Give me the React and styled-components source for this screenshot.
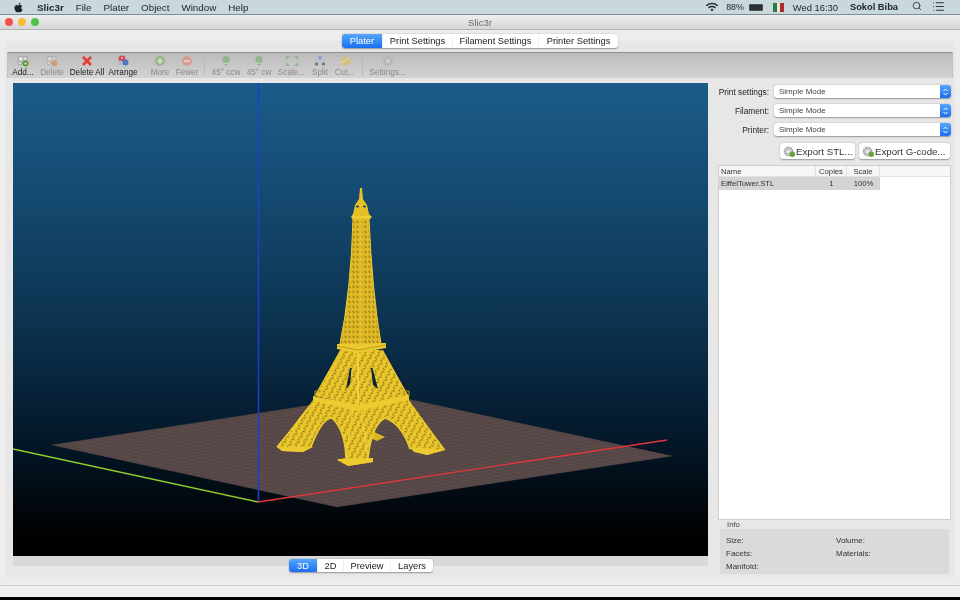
import React from 'react'
import styled, { createGlobalStyle } from 'styled-components'
import { FaApple, FaWifi } from 'react-icons/fa'
import { Search, List } from 'lucide-react'

const GlobalStyle = createGlobalStyle`
  html, body {
    margin: 0;
    padding: 0;
    background: #000;
    overflow: hidden;
  }
  * {
    box-sizing: border-box;
  }
`

const Screen = styled.div`
  width: 960px;
  height: 600px;
  display: flex;
  flex-direction: column;
  overflow: hidden;
  background: #000;
  font-family: 'Liberation Sans', Arial, sans-serif;
  color: #222;
  filter: blur(0.3px);
`

const MenuBar = styled.div`
  height: 15px;
  flex: none;
  display: flex;
  align-items: center;
  padding: 0 15px 0 13px;
  background: #c9d8dc;
  border-bottom: 1px solid #7f8e91;
  font-size: 9.8px;
  color: #20282b;
`

const MenuItem = styled.span`
  margin-left: ${(p) => p.$gap}px;
  font-size: ${(p) => (p.$size ? `${p.$size}px` : 'inherit')};
  font-weight: ${(p) => (p.$bold ? 700 : 400)};
  white-space: nowrap;
`

const Spacer = styled.div`
  flex: 1;
`

const Flag = styled.div`
  width: 11px;
  height: 9px;
  margin-left: 10px;
  background: linear-gradient(to right, #2f7a3a 0 33%, #e6e6e6 33% 66%, #b02a2a 66%);
`

const Battery = styled.div`
  width: 14px;
  height: 7px;
  margin-left: 5px;
  background: #2a2f31;
  border: 1px solid #4a5052;
  border-radius: 1px;
`

const Window = styled.div`
  height: 582px;
  flex: none;
  display: flex;
  flex-direction: column;
  background: #ededed;
  border-radius: 4px 4px 0 0;
`

const TitleBar = styled.div`
  height: 15px;
  flex: none;
  position: relative;
  display: flex;
  align-items: center;
  justify-content: center;
  background: linear-gradient(to bottom, #eeeeee, #d6d6d6);
  border-bottom: 1px solid #b2b2b2;
  font-size: 9.5px;
  color: #6a6a6a;
`

const Lights = styled.div`
  position: absolute;
  left: 5px;
  top: 3px;
  display: flex;
  gap: 5px;
`

const Light = styled.span`
  width: 8px;
  height: 8px;
  border-radius: 50%;
  background: ${(p) => p.$color};
`

const Segments = styled.div`
  align-self: center;
  flex: none;
  display: flex;
  height: 14px;
  margin-top: ${(p) => p.$top}px;
  margin-bottom: -7px;
  position: relative;
  z-index: 1;
  background: #fff;
  border-radius: 3px;
  box-shadow: 0 0.5px 1.5px rgba(0, 0, 0, 0.35);
  font-size: ${(p) => p.$size}px;
`

const Segment = styled.div`
  width: ${(p) => p.$width}px;
  display: flex;
  align-items: center;
  justify-content: center;
  color: ${(p) => (p.$active ? '#fff' : '#222')};
  background: ${(p) => (p.$active ? 'linear-gradient(to bottom, #55a6fb, #1a6ff0)' : 'transparent')};
  border-radius: ${(p) => (p.$active ? '3px 0 0 3px' : '0')};
  border-left: ${(p) => (p.$active ? 'none' : '1px solid #f0f0f0')};
`

const TabBox = styled.div`
  flex: none;
  height: 536px;
  margin: 0 5px;
  padding: 11px 2px 0;
  display: flex;
  flex-direction: column;
  background: #e7e7e7;
  border-radius: 3px;
`

const WindowFooter = styled.div`
  flex: 1;
  margin-top: 8px;
  border-top: 1px solid #cfcfcf;
  background: #f0f0f0;
`

const Toolbar = styled.div`
  height: 26px;
  flex: none;
  display: flex;
  align-items: flex-start;
  padding: 2px 0 0 3px;
  background: linear-gradient(to bottom, #bcbcbc, #d3d3d3);
  border-top: 1px solid #8c8c8c;
  border-left: 1px solid #c0c0c0;
  border-right: 1px solid #c0c0c0;
`

const Tool = styled.div`
  width: ${(p) => p.$width}px;
  margin-right: ${(p) => p.$gap}px;
  display: flex;
  flex-direction: column;
  align-items: center;
  font-size: 8.2px;
  line-height: 10px;
  white-space: nowrap;
  color: ${(p) => (p.$off ? '#8a8a8a' : '#202020')};
  svg {
    display: block;
    height: 12px;
    margin-bottom: 1px;
    opacity: ${(p) => (p.$off ? 0.6 : 1)};
  }
`

const ToolDivider = styled.div`
  width: 1px;
  height: 20px;
  margin: 1px 6px 0 0;
  background: #bababa;
`

const Body = styled.div`
  flex: 1;
  display: flex;
  min-height: 0;
`

const LeftColumn = styled.div`
  width: 701px;
  flex: none;
  padding: 5px 0 0 6px;
  display: flex;
  flex-direction: column;
`

const Viewport = styled.div`
  width: 695px;
  height: 473px;
  flex: none;
  background: linear-gradient(to bottom, #1b5c89 0%, #14496f 25%, #0c3350 50%, #04182a 75%, #000 96%);
`

const SceneSvg = styled.svg`
  display: block;
  width: 695px;
  height: 473px;
`

const ViewFooter = styled.div`
  height: 10px;
  flex: none;
  display: flex;
  flex-direction: column;
  background: #d9d9d9;
  border-radius: 0 0 2px 2px;
`

const ViewTabs = styled(Segments)`
  margin-left: 276px;
  align-self: flex-start;
  height: 13px;
`

const SidePanel = styled.div`
  flex: 1;
  min-width: 0;
  padding: 7px 0 0 10px;
  display: flex;
  flex-direction: column;
`

const FieldRow = styled.div`
  height: 13px;
  flex: none;
  margin-bottom: 6px;
  display: flex;
  align-items: center;
  justify-content: flex-end;
  gap: 5px;
  padding-right: 2px;
`

const FieldLabel = styled.span`
  font-size: 8.3px;
  color: #222;
`

const Select = styled.div`
  width: 177px;
  height: 13px;
  display: flex;
  align-items: center;
  justify-content: space-between;
  padding-left: 5px;
  background: #fff;
  border-radius: 3px;
  box-shadow: 0 0.5px 1.5px rgba(0, 0, 0, 0.35);
  font-size: 8px;
  color: #444;
`

const Stepper = styled.div`
  width: 11px;
  height: 13px;
  display: flex;
  align-items: center;
  justify-content: center;
  background: linear-gradient(to bottom, #55a6fb, #1a6ff0);
  border-radius: 0 3px 3px 0;
`

const ExportRow = styled.div`
  flex: none;
  display: flex;
  justify-content: flex-end;
  gap: 4px;
  margin: 1px 3px 6px 0;
`

const ExportButton = styled.div`
  width: ${(p) => p.$width}px;
  height: 16px;
  display: flex;
  align-items: center;
  padding-left: 3px;
  background: #fff;
  border-radius: 3px;
  box-shadow: 0 0.5px 1.5px rgba(0, 0, 0, 0.35);
  font-size: 9.7px;
  color: #333;
  white-space: nowrap;
`

const ObjectList = styled.div`
  width: 233px;
  height: 355px;
  flex: none;
  background: #fff;
  border: 1px solid #cfcfcf;
`

const ListRow = styled.div`
  display: grid;
  grid-template-columns: 97px 31px 33px 70px;
  height: ${(p) => p.$height}px;
  align-items: center;
  font-size: 7.7px;
  color: #333;
  background: ${(p) => (p.$header ? '#f6f6f6' : 'transparent')};
  border-bottom: ${(p) => (p.$header ? '1px solid #e2e2e2' : 'none')};
`

const ListCell = styled.div`
  height: 100%;
  display: flex;
  align-items: center;
  justify-content: ${(p) => (p.$center ? 'center' : 'flex-start')};
  padding-left: ${(p) => (p.$center ? 0 : 2)}px;
  background: ${(p) => (p.$selected ? '#d4d4d4' : 'transparent')};
  border-right: ${(p) => (p.$header ? '1px solid #e0e0e0' : 'none')};
`

const InfoTitle = styled.div`
  height: 9px;
  flex: none;
  padding-left: 9px;
  font-size: 7.7px;
  line-height: 9px;
  color: #444;
`

const InfoBox = styled.div`
  width: 229px;
  height: 45px;
  flex: none;
  margin-left: 2px;
  padding: 5px 0 0 6px;
  display: grid;
  grid-template-columns: 110px 1fr;
  grid-auto-rows: 13px;
  align-items: center;
  background: #dadada;
  border-radius: 2px;
  font-size: 8px;
  color: #333;
`

const tools = [
  { label: 'Add...', kind: 'add', width: 24, gap: 5 },
  { label: 'Delete', kind: 'del', width: 24, gap: 5, off: true },
  { label: 'Delete All', kind: 'x', width: 36, gap: 3 },
  { label: 'Arrange', kind: 'arrange', width: 30, gap: 12 },
  { label: 'More', kind: 'more', width: 20, gap: 6, off: true },
  { label: 'Fewer', kind: 'fewer', width: 22, gap: 6, off: true },
  { divider: true },
  { label: '45° ccw', kind: 'rot', width: 30, gap: 5, off: true },
  { label: '45° cw', kind: 'rot', width: 26, gap: 6, off: true },
  { label: 'Scale...', kind: 'scale', width: 27, gap: 7, off: true },
  { label: 'Split', kind: 'split', width: 16, gap: 6, off: true },
  { label: 'Cut...', kind: 'cut', width: 21, gap: 7, off: true },
  { divider: true },
  { label: 'Settings...', kind: 'gear', width: 37, gap: 0, off: true }
]

const ToolGlyph = ({ kind }) => {
  const art = {
    add: (
      <>
        <circle cx="5" cy="4" r="2.6" fill="#e8e8e8" stroke="#8d8d8d" strokeWidth="0.7" />
        <circle cx="9" cy="3.5" r="2.2" fill="#dcdcdc" stroke="#8d8d8d" strokeWidth="0.7" />
        <circle cx="4" cy="8" r="2" fill="#d8d8d8" stroke="#8d8d8d" strokeWidth="0.7" />
        <circle cx="9.5" cy="8.5" r="3" fill="#5f9a32" />
        <circle cx="9.5" cy="8.5" r="1.1" fill="#e7f3d4" />
      </>
    ),
    del: (
      <>
        <circle cx="5" cy="4" r="2.6" fill="#e8e8e8" stroke="#8d8d8d" strokeWidth="0.7" />
        <circle cx="9" cy="3.5" r="2.2" fill="#dcdcdc" stroke="#8d8d8d" strokeWidth="0.7" />
        <circle cx="4" cy="8" r="2" fill="#d8d8d8" stroke="#8d8d8d" strokeWidth="0.7" />
        <circle cx="9.5" cy="8.5" r="3" fill="#d9883c" />
      </>
    ),
    x: <path d="M3 2 L11 10 M11 2 L3 10" stroke="#e23d36" strokeWidth="2.6" />,
    arrange: (
      <>
        <circle cx="6" cy="4" r="3.4" fill="#d8454a" />
        <circle cx="9.5" cy="7.5" r="3" fill="#4a78c4" />
        <circle cx="4.5" cy="8" r="2.4" fill="#b9b9c4" />
        <circle cx="6" cy="3" r="1" fill="#f3c7c7" />
      </>
    ),
    more: (
      <>
        <circle cx="7" cy="6" r="5" fill="#74b060" />
        <path d="M7 3 V9 M4 6 H10" stroke="#e6f3df" strokeWidth="1.5" />
      </>
    ),
    fewer: (
      <>
        <circle cx="7" cy="6" r="5" fill="#e88070" />
        <path d="M4 6 H10" stroke="#fbe6e2" strokeWidth="1.6" />
      </>
    ),
    rot: (
      <>
        <circle cx="7" cy="4.5" r="3.6" fill="#6fae66" />
        <path d="M5 9 H9 L7 11.5 Z" fill="#6fae66" />
      </>
    ),
    scale: (
      <>
        <path d="M1 1 H5 L1 5 Z M13 1 H9 L13 5 Z M1 11 H5 L1 7 Z M13 11 H9 L13 7 Z" fill="#6fae66" />
      </>
    ),
    split: (
      <>
        <circle cx="7" cy="2.5" r="2" fill="#5f93d8" />
        <circle cx="3.5" cy="9" r="1.8" fill="#444" />
        <circle cx="10.5" cy="9" r="1.8" fill="#444" />
        <circle cx="7" cy="6" r="1.1" fill="#9cc0ea" />
      </>
    ),
    cut: (
      <>
        <path d="M2 5 L7 1 L13 4 L12 9 L7 11 L3 9 Z" fill="#e4bd52" />
        <path d="M3 8 L11 3" stroke="#f7e7b4" strokeWidth="1.2" />
      </>
    ),
    gear: (
      <>
        <circle cx="7" cy="6" r="4" fill="#bdbdbd" stroke="#9a9a9a" strokeWidth="1.4" strokeDasharray="1.5 1" />
        <circle cx="7" cy="6" r="1.6" fill="#e0e0e0" />
      </>
    )
  }
  return <svg viewBox="0 0 14 12" width="14" height="12">{art[kind]}</svg>
}

const CogGlyph = () => (
  <svg viewBox="0 0 14 14" width="13" height="13">
    <circle cx="6" cy="7" r="4.6" fill="#c6c9c4" stroke="#8f948c" strokeWidth="1.2" strokeDasharray="1.6 1" />
    <circle cx="6" cy="7" r="1.7" fill="#eeeeee" />
    <circle cx="10" cy="10" r="3" fill="#67a53a" />
  </svg>
)

const StepperGlyph = () => (
  <svg viewBox="0 0 7 10" width="7" height="10">
    <path d="M1.5 4 L3.5 2 L5.5 4 M1.5 6 L3.5 8 L5.5 6" fill="none" stroke="#fff" strokeWidth="1" />
  </svg>
)

// bed corners, in page coordinates
const bed = { a: [52, 445], b: [384, 394], c: [672, 456], d: [337, 507] }
const lerp = (p, q, t) => [p[0] + (q[0] - p[0]) * t, p[1] + (q[1] - p[1]) * t]
const bedLines = Array.from({ length: 33 }, (_, i) => i / 32).flatMap((t) => [
  [lerp(bed.a, bed.b, t), lerp(bed.d, bed.c, t)],
  [lerp(bed.a, bed.d, t), lerp(bed.b, bed.c, t)]
])

const Scene = () => (
  <SceneSvg viewBox="13 83 695 473">
    <defs>
      <pattern id="lattice" width="6" height="6" patternUnits="userSpaceOnUse" patternTransform="rotate(28)">
        <rect width="6" height="6" fill="#e8c52a" />
        <path d="M1 1 L3.4 2.4 M4 4 L1.6 5.2" stroke="#7d600e" strokeWidth="1" />
        <path d="M4.6 0.6 L5.6 2.4" stroke="#f5dc3e" strokeWidth="0.8" />
      </pattern>
      <pattern id="latticeFine" width="4" height="5" patternUnits="userSpaceOnUse">
        <rect width="4" height="5" fill="#dcb624" />
        <path d="M0.8 0.8 L2.2 3.2" stroke="#7c600d" strokeWidth="0.9" />
        <path d="M3 3.4 L3.6 4.6" stroke="#f0d436" strokeWidth="0.7" />
      </pattern>
    </defs>

    <polygon points={[bed.a, bed.b, bed.c, bed.d].join(' ')} fill="#534647" />
    {bedLines.map(([p, q], i) => (
      <line key={i} x1={p[0]} y1={p[1]} x2={q[0]} y2={q[1]} stroke="#7d5c56" strokeWidth="0.5" strokeOpacity="0.45" />
    ))}

    <line x1="258.5" y1="83" x2="258.5" y2="502" stroke="#1b40cf" strokeWidth="1.5" />
    <line x1="13" y1="449" x2="258" y2="502" stroke="#8fce2e" strokeWidth="1.4" />
    <line x1="258" y1="502" x2="667" y2="440" stroke="#e0363c" strokeWidth="1.4" />

    {/* back leg */}
    <polygon points="370,430 385,437 377,441 370,438" fill="#dcb624" />

    {/* lower legs and arches */}
    <path
      d="M313,400 L409,400 L445,450 L427,455 L410,449 Q402,424 385,418 Q372,424 368,458 L373,462 L348,466 L337,460 L346,458 Q345,430 332,418 Q322,418 311,447 L303,452 L282,451 L277,447 Z"
      fill="url(#lattice)"
    />
    <path d="M277,447 L313,447 L303,452 L282,451 Z" fill="#eccb30" />
    <path d="M337,459 L373,458 L373,462 L348,466 Z" fill="#eccb30" />
    <path d="M410,447 L445,450 L427,455 L414,452 Z" fill="#eccb30" />
    <path d="M346,458 L353,410 M368,457 L361,410" stroke="#f0d234" strokeWidth="1.2" fill="none" />
    <path d="M311,447 Q322,418 332,418 Q345,430 346,458 M368,458 Q372,424 385,418 Q402,424 410,449" stroke="#eccb30" strokeWidth="1.6" fill="none" />
    <path d="M277,447 L314,402 M445,450 L408,402" stroke="#eccb30" strokeWidth="1.2" fill="none" />

    {/* middle section */}
    <polygon points="340,350 383,350 408,396 358,406 315,396" fill="url(#lattice)" />
    <polygon points="350,368 351.5,368 350,384 346,389" fill="#07233a" />
    <polygon points="371,368 372.5,368 378,389 373,385" fill="#07233a" />
    <path d="M358,353 L358,406" stroke="#f0d234" strokeWidth="2" />
    <path d="M340,352 L315,396 M383,352 L408,396" stroke="#eccb30" strokeWidth="1.2" />

    {/* first platform */}
    <polygon points="313,396 358,405 409,395 409,400 358,411 313,401" fill="#eccb30" />
    <path d="M315,397 V391 H322 M403,396 V391 H409 V396" stroke="#b8951c" strokeWidth="1" fill="none" />

    {/* upper shaft */}
    <path d="M353,219 L369,219 Q372,290 381,344 L340,344 Q351,290 353,219 Z" fill="url(#latticeFine)" />
    <path d="M353,219 Q351,290 340,344 M369,219 Q372,290 381,344" stroke="#eccb30" strokeWidth="1" fill="none" />
    <path d="M361,219 V344" stroke="#eccb30" strokeWidth="1.2" />

    {/* second platform */}
    <polygon points="337,344 386,343 386,348 358,353 337,349" fill="#eccb30" />
    <path d="M337,346 L358,350 L386,345" stroke="#a98818" strokeWidth="0.7" fill="none" />

    {/* top */}
    <path
      d="M360,188 L362,188 L363,199 L367,205 L369,214 L372,217 L369,220 L353,220 L351,217 L353,214 L355,205 L359,199 Z"
      fill="#e4bf26"
    />
    <ellipse cx="357.5" cy="206.5" rx="1.6" ry="1" fill="#23405a" />
    <ellipse cx="364.5" cy="206.5" rx="1.6" ry="1" fill="#23405a" />
    <path d="M352,217 H371" stroke="#f2da40" strokeWidth="1.2" />
  </SceneSvg>
)

const App = () => (
  <>
    <GlobalStyle />
    <Screen>
      <MenuBar>
        <FaApple size={11} color="#1c2224" />
        <MenuItem $gap={13} $bold>Slic3r</MenuItem>
        <MenuItem $gap={12}>File</MenuItem>
        <MenuItem $gap={12}>Plater</MenuItem>
        <MenuItem $gap={12}>Object</MenuItem>
        <MenuItem $gap={12}>Window</MenuItem>
        <MenuItem $gap={12}>Help</MenuItem>
        <Spacer />
        <FaWifi size={12} color="#2a3133" />
        <MenuItem $gap={8} $size={8.8}>88%</MenuItem>
        <Battery />
        <Flag />
        <MenuItem $gap={9} $size={9.4}>Wed 16:30</MenuItem>
        <MenuItem $gap={12} $size={9.3} $bold>Sokol Biba</MenuItem>
        <MenuItem $gap={14}>
          <Search size={10} strokeWidth={2} color="#2a3133" />
        </MenuItem>
        <MenuItem $gap={10}>
          <List size={13} strokeWidth={2} color="#2a3133" />
        </MenuItem>
      </MenuBar>

      <Window>
        <TitleBar>
          <Lights>
            <Light $color="#f2514a" />
            <Light $color="#f5bb3c" />
            <Light $color="#4ec24a" />
          </Lights>
          Slic3r
        </TitleBar>

        <Segments $top={4} $size={9.3}>
          <Segment $width={40} $active>Plater</Segment>
          <Segment $width={70}>Print Settings</Segment>
          <Segment $width={86}>Filament Settings</Segment>
          <Segment $width={80}>Printer Settings</Segment>
        </Segments>

        <TabBox>
          <Toolbar>
            {tools.map((t, i) =>
              t.divider ? (
                <ToolDivider key={i} />
              ) : (
                <Tool key={i} $width={t.width} $gap={t.gap} $off={t.off}>
                  <ToolGlyph kind={t.kind} />
                  {t.label}
                </Tool>
              )
            )}
          </Toolbar>

          <Body>
            <LeftColumn>
              <Viewport>
                <Scene />
              </Viewport>
              <ViewFooter>
                <ViewTabs $top={3} $size={9.3}>
                  <Segment $width={28} $active>3D</Segment>
                  <Segment $width={26}>2D</Segment>
                  <Segment $width={47}>Preview</Segment>
                  <Segment $width={43}>Layers</Segment>
                </ViewTabs>
              </ViewFooter>
            </LeftColumn>

            <SidePanel>
              <FieldRow>
                <FieldLabel>Print settings:</FieldLabel>
                <Select>Simple Mode<Stepper><StepperGlyph /></Stepper></Select>
              </FieldRow>
              <FieldRow>
                <FieldLabel>Filament:</FieldLabel>
                <Select>Simple Mode<Stepper><StepperGlyph /></Stepper></Select>
              </FieldRow>
              <FieldRow>
                <FieldLabel>Printer:</FieldLabel>
                <Select>Simple Mode<Stepper><StepperGlyph /></Stepper></Select>
              </FieldRow>

              <ExportRow>
                <ExportButton $width={75}><CogGlyph />Export STL...</ExportButton>
                <ExportButton $width={91}><CogGlyph />Export G-code...</ExportButton>
              </ExportRow>

              <ObjectList>
                <ListRow $header $height={11}>
                  <ListCell $header>Name</ListCell>
                  <ListCell $header $center>Copies</ListCell>
                  <ListCell $header $center>Scale</ListCell>
                  <ListCell />
                </ListRow>
                <ListRow $height={13}>
                  <ListCell $selected>EiffelTower.STL</ListCell>
                  <ListCell $selected $center>1</ListCell>
                  <ListCell $selected $center>100%</ListCell>
                  <ListCell />
                </ListRow>
              </ObjectList>

              <InfoTitle>Info</InfoTitle>
              <InfoBox>
                <span>Size:</span>
                <span>Volume:</span>
                <span>Facets:</span>
                <span>Materials:</span>
                <span>Manifold:</span>
              </InfoBox>
            </SidePanel>
          </Body>
        </TabBox>
        <WindowFooter />
      </Window>
    </Screen>
  </>
)

export default App
